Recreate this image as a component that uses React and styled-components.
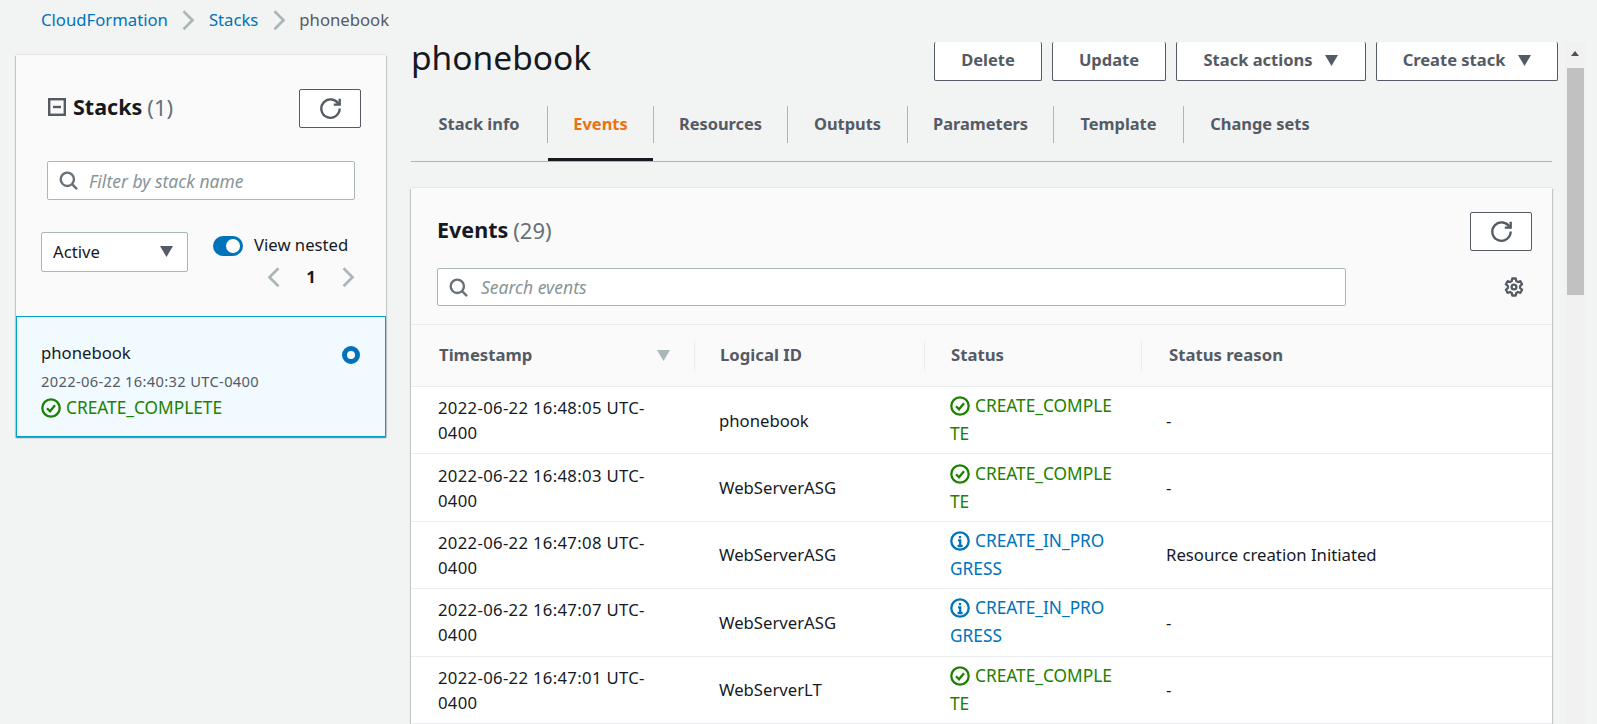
import React from 'react';
import styled, { createGlobalStyle } from 'styled-components';

const GlobalStyle = createGlobalStyle`
    html, body {
        margin: 0;
        padding: 0;
        background: #f2f3f3;
        overflow: hidden;
    }
    body {
        font-family: "Noto Sans", "Open Sans", sans-serif;
        font-size: 16.7px;
        color: #16191f;
    }
`;

const Page = styled.div`
    position: relative;
    width: 1597px;
    height: 724px;
    overflow: hidden;
`;

const Breadcrumbs = styled.nav`
    height: 42px;
    padding: 8px 0 0 41px;
    box-sizing: border-box;
    display: flex;
    align-items: flex-start;
    line-height: 24px;
    color: #545b64;
`;

const Crumb = styled.a`
    color: #0073bb;
`;

const CrumbSep = styled.span`
    display: flex;
    width: 41px;
    height: 24px;
    align-items: center;
    justify-content: center;
`;

const Columns = styled.div`
    display: flex;
    align-items: flex-start;
    padding-left: 16px;
`;

const StackPanel = styled.aside`
    width: 370px;
    margin-top: 13px;
    background: #fafafa;
    box-shadow: 0 1px 1px 0 rgba(0, 28, 36, .3), 1px 1px 1px 0 rgba(0, 28, 36, .15), -1px 1px 1px 0 rgba(0, 28, 36, .15), 0 -1px 1px 0 rgba(0, 28, 36, .05);
`;

const PanelTop = styled.div`
    height: 261px;
    box-sizing: border-box;
    padding: 34px 25px 0;
`;

const PanelTitleRow = styled.div`
    display: flex;
    justify-content: space-between;
    align-items: center;
    padding-left: 7px;
`;

const Heading = styled.h2`
    margin: 0 0 4px;
    display: flex;
    align-items: center;
    font-size: 21.5px;
    line-height: 30px;
    font-weight: 700;
    color: #16191f;
    span {
        font-weight: 400;
        font-size: 22px;
        color: #687078;
        margin-left: 5px;
    }
`;

const CollapseIcon = styled.svg`
    margin-right: 7px;
`;

const IconButton = styled.button`
    width: 62px;
    height: 39px;
    padding: 0;
    display: flex;
    align-items: center;
    justify-content: center;
    background: #fff;
    border: 1px solid #545b64;
    border-radius: 2px;
`;

const SearchBox = styled.div`
    display: flex;
    align-items: center;
    box-sizing: border-box;
    height: ${p => p.$h}px;
    width: ${p => p.$w}px;
    padding-left: 11px;
    background: #fff;
    border: 1px solid #aab7b8;
    border-radius: 2px;
    font-size: 17.5px;
    font-style: italic;
    color: #879596;
    svg {
        margin-right: ${p => p.$gap}px;
    }
`;

const FilterRow = styled.div`
    margin: 33px 0 0 6px;
`;

const ControlsRow = styled.div`
    display: flex;
    margin-top: 32px;
`;

const Select = styled.div`
    display: flex;
    align-items: center;
    justify-content: space-between;
    box-sizing: border-box;
    width: 147px;
    height: 40px;
    padding: 0 14px 2px 11px;
    background: #fff;
    border: 1px solid #aab7b8;
    border-radius: 2px;
    svg {
        margin-top: 2px;
    }
`;

const NestedBox = styled.div`
    margin-left: 25px;
`;

const NestedToggle = styled.div`
    display: flex;
    align-items: center;
    height: 26px;
    margin-top: 1px;
    gap: 11px;
`;

const NestedLabel = styled.span`
    margin-top: -3px;
`;

const Track = styled.span`
    display: flex;
    justify-content: flex-end;
    align-items: center;
    box-sizing: border-box;
    width: 30px;
    height: 20px;
    padding-right: 3px;
    border-radius: 10px;
    background: #0073bb;
    &::after {
        content: "";
        width: 14px;
        height: 14px;
        border-radius: 50%;
        background: #fff;
    }
`;

const Pager = styled.div`
    display: flex;
    align-items: center;
    justify-content: space-between;
    width: 92px;
    margin: 6px 0 0 52px;
    font-weight: 700;
    line-height: 24px;
`;

const StackCard = styled.div`
    display: flex;
    justify-content: space-between;
    box-sizing: border-box;
    height: 121px;
    padding: 23px 25px 0 24px;
    background: #f1faff;
    border: 1px solid #00a1c9;
`;

const StackName = styled.div`
    line-height: 25px;
`;

const StackDate = styled.div`
    margin: 6px 0 3px;
    font-size: 14.7px;
    letter-spacing: .33px;
    line-height: 20px;
    color: #545b64;
`;

const Radio = styled.span`
    display: block;
    box-sizing: border-box;
    width: 18px;
    height: 18px;
    margin-top: 6px;
    border-radius: 50%;
    border: 5px solid #0073bb;
    background: #fff;
`;

const Status = styled.div`
    color: ${p => (p.$kind === 'info' ? '#0073bb' : '#1d8102')};
    font-size: 17.3px;
    line-height: 28px;
    word-break: break-all;
    svg {
        vertical-align: -4px;
        margin-right: 5px;
    }
`;

const Main = styled.main`
    width: 1141px;
    margin-left: 25px;
`;

const TitleBar = styled.div`
    display: flex;
    justify-content: space-between;
    height: 39px;
`;

const Title = styled.h1`
    margin: 0;
    font-size: 33.5px;
    font-weight: 400;
    line-height: 30px;
    color: #16191f;
`;

const Actions = styled.div`
    display: flex;
    gap: 10px;
    margin-right: -6px;
`;

const ActionButton = styled.button`
    display: flex;
    align-items: center;
    justify-content: center;
    gap: 13px;
    box-sizing: border-box;
    width: ${p => p.$w}px;
    height: 39px;
    padding: 0 0 4px;
    background: #fff;
    border: 1px solid #545b64;
    border-top: none;
    border-radius: 2px;
    font: 700 16.5px "Noto Sans", sans-serif;
    color: #545b64;
    svg {
        margin-top: 4px;
    }
`;

const Tabs = styled.div`
    display: flex;
    height: 56px;
    margin-top: 25px;
    box-sizing: border-box;
    border-bottom: 1px solid #aab7b8;
`;

const Tab = styled.div`
    position: relative;
    box-sizing: border-box;
    width: ${p => p.$w}px;
    height: 37px;
    line-height: 35px;
    text-align: center;
    font-size: 16.4px;
    font-weight: 700;
    color: ${p => (p.$active ? '#ec7211' : '#545b64')};
    border-right: ${p => (p.$last ? 'none' : '1px solid #aab7b8')};
    &::after {
        content: "";
        display: ${p => (p.$active ? 'block' : 'none')};
        position: absolute;
        left: 0;
        right: 0;
        bottom: -18px;
        height: 3px;
        background: #16191f;
    }
`;

const EventsCard = styled.section`
    margin-top: 26px;
    background: #fff;
    box-shadow: 0 1px 1px 0 rgba(0, 28, 36, .3), 1px 1px 1px 0 rgba(0, 28, 36, .15), -1px 1px 1px 0 rgba(0, 28, 36, .15), 0 -1px 1px 0 rgba(0, 28, 36, .05);
`;

const CardHead = styled.div`
    height: 137px;
    box-sizing: border-box;
    padding: 24px 20px 0 26px;
    background: #fafafa;
    border-bottom: 1px solid #eaeded;
`;

const CardTitleRow = styled.div`
    display: flex;
    justify-content: space-between;
    height: 39px;
    align-items: center;
`;

const CardSearchRow = styled.div`
    display: flex;
    justify-content: space-between;
    align-items: center;
    margin-top: 17px;
    padding-right: 8px;
`;

const Table = styled.table`
    width: 100%;
    table-layout: fixed;
    border-collapse: collapse;
`;

const Th = styled.th`
    width: ${p => (p.$w ? `${p.$w}px` : 'auto')};
    height: 61px;
    padding: 0;
    background: #fafafa;
    border-bottom: 1px solid #eaeded;
    text-align: left;
`;

const ThInner = styled.div`
    display: flex;
    align-items: flex-start;
    justify-content: space-between;
    height: 30px;
    padding: 0 24px 0 ${p => p.$pad}px;
    border-right: ${p => (p.$last ? 'none' : '1px solid #eaeded')};
    font-weight: 700;
    color: #545b64;
    line-height: 27px;
    svg {
        align-self: center;
    }
`;

const Td = styled.td`
    height: 66.4px;
    padding: 0 25px 0 24px;
    border-bottom: 1px solid #eaeded;
    line-height: 25px;
    color: #16191f;
`;

const TimeCell = styled(Td)`
    padding-left: 27px;
    letter-spacing: .32px;
`;

const StatusCell = styled(Td)`
    padding: 0 29px 0 25px;
`;

const ScrollTrack = styled.div`
    position: absolute;
    top: 42px;
    bottom: 0;
    left: 1565px;
    width: 21px;
    background: #f1f1f1;
`;

const ScrollThumb = styled.div`
    position: absolute;
    top: 26px;
    left: 2px;
    width: 17px;
    height: 227px;
    background: #c1c1c1;
`;

const ScrollArrow = styled.div`
    position: absolute;
    top: 9px;
    left: 6px;
    border: 4.5px solid transparent;
    border-top: none;
    border-bottom: 5px solid #505050;
`;

const Chevron = ({ dir = 'right', color = '#aab7b8', size = 18 }) => (
    <svg width={size} height={size * 1.25} viewBox="0 0 16 20" fill="none" stroke={color} strokeWidth="2.4">
        <path d={dir === 'right' ? 'M4 2l8 8-8 8' : 'M12 2l-8 8 8 8'} />
    </svg>
);

const RefreshIcon = () => (
    <svg width="21" height="21" viewBox="0 0 16 16" fill="none" stroke="#545b64" strokeWidth="1.8">
        <path d="M10.5 5h4.5V.5" />
        <path d="M15 8a7 7 0 1 1-.7-3" />
    </svg>
);

const SearchIcon = () => (
    <svg width="19" height="19" viewBox="0 0 16 16" fill="none" stroke="#687078" strokeWidth="2">
        <circle cx="7" cy="7" r="5.6" />
        <path d="M11 11l4.2 4.2" />
    </svg>
);

const Caret = ({ color = '#545b64', w = 13 }) => (
    <svg width={w} height={w * 0.85} viewBox="0 0 13 11">
        <path d="M0 0h13L6.5 11z" fill={color} />
    </svg>
);

const GearIcon = () => (
    <svg width="20" height="20" viewBox="0 0 20 20" fill="none" stroke="#545b64" strokeWidth="2.3" strokeLinejoin="round">
        <path d="M8.3 1.5h3.4l.6 2.6 1.6.9 2.5-.8 1.7 3-2 1.8v2l2 1.8-1.7 3-2.5-.8-1.6.9-.6 2.6H8.3l-.6-2.6-1.6-.9-2.5.8-1.7-3 2-1.8V9L1.9 7.2l1.7-3 2.5.8 1.6-.9z" />
        <circle cx="10" cy="10" r="2.4" />
    </svg>
);

const StatusIcon = ({ kind }) => {
    const color = kind === 'info' ? '#0073bb' : '#1d8102';
    return (
        <svg width="20" height="20" viewBox="0 0 20 20" fill="none" stroke={color} strokeWidth="2.3">
            <circle cx="10" cy="10" r="8.7" />
            {kind === 'info'
                ? <path d="M8 9.3h2.2V15M7.6 15h5M10 5v2.3" />
                : <path d="M6 10.2l3 3 5-6" />}
        </svg>
    );
};

const StatusText = ({ kind, text }) => (
    <Status $kind={kind}>
        <StatusIcon kind={kind} />{text}
    </Status>
);

const tabs = [
    { label: 'Stack info', w: 137 },
    { label: 'Events', w: 106, active: true },
    { label: 'Resources', w: 134 },
    { label: 'Outputs', w: 120 },
    { label: 'Parameters', w: 146 },
    { label: 'Template', w: 130 },
    { label: 'Change sets', w: 152, last: true },
];

const events = [
    { time: '2022-06-22 16:48:05 UTC-0400', id: 'phonebook', status: 'CREATE_COMPLETE', reason: '-' },
    { time: '2022-06-22 16:48:03 UTC-0400', id: 'WebServerASG', status: 'CREATE_COMPLETE', reason: '-' },
    { time: '2022-06-22 16:47:08 UTC-0400', id: 'WebServerASG', status: 'CREATE_IN_PROGRESS', kind: 'info', reason: 'Resource creation Initiated' },
    { time: '2022-06-22 16:47:07 UTC-0400', id: 'WebServerASG', status: 'CREATE_IN_PROGRESS', kind: 'info', reason: '-' },
    { time: '2022-06-22 16:47:01 UTC-0400', id: 'WebServerLT', status: 'CREATE_COMPLETE', reason: '-' },
];

export default function App() {
    return (
        <Page>
            <GlobalStyle />
            <Breadcrumbs>
                <Crumb>CloudFormation</Crumb>
                <CrumbSep><Chevron /></CrumbSep>
                <Crumb>Stacks</Crumb>
                <CrumbSep><Chevron /></CrumbSep>
                <span>phonebook</span>
            </Breadcrumbs>
            <Columns>
                <StackPanel>
                    <PanelTop>
                        <PanelTitleRow>
                            <Heading>
                                <CollapseIcon width="18" height="18" viewBox="0 0 18 18" fill="none" stroke="#545b64" strokeWidth="2.4">
                                    <rect x="1.2" y="1.2" width="15.6" height="15.6" />
                                    <path d="M5 9h8" />
                                </CollapseIcon>
                                Stacks<span>(1)</span>
                            </Heading>
                            <IconButton><RefreshIcon /></IconButton>
                        </PanelTitleRow>
                        <FilterRow>
                            <SearchBox $w={308} $h={39} $gap={11}><SearchIcon />Filter by stack name</SearchBox>
                        </FilterRow>
                        <ControlsRow>
                            <Select>Active<Caret /></Select>
                            <NestedBox>
                                <NestedToggle><Track /><NestedLabel>View nested</NestedLabel></NestedToggle>
                                <Pager>
                                    <Chevron dir="left" />
                                    1
                                    <Chevron />
                                </Pager>
                            </NestedBox>
                        </ControlsRow>
                    </PanelTop>
                    <StackCard>
                        <div>
                            <StackName>phonebook</StackName>
                            <StackDate>2022-06-22 16:40:32 UTC-0400</StackDate>
                            <StatusText text="CREATE_COMPLETE" />
                        </div>
                        <Radio />
                    </StackCard>
                </StackPanel>
                <Main>
                    <TitleBar>
                        <Title>phonebook</Title>
                        <Actions>
                            <ActionButton $w={108}>Delete</ActionButton>
                            <ActionButton $w={114}>Update</ActionButton>
                            <ActionButton $w={190}>Stack actions<Caret /></ActionButton>
                            <ActionButton $w={182}>Create stack<Caret /></ActionButton>
                        </Actions>
                    </TitleBar>
                    <Tabs>
                        {tabs.map(t => (
                            <Tab key={t.label} $w={t.w} $active={t.active} $last={t.last}>{t.label}</Tab>
                        ))}
                    </Tabs>
                    <EventsCard>
                        <CardHead>
                            <CardTitleRow>
                                <Heading>Events<span>(29)</span></Heading>
                                <IconButton><RefreshIcon /></IconButton>
                            </CardTitleRow>
                            <CardSearchRow>
                                <SearchBox $w={909} $h={38} $gap={13}><SearchIcon />Search events</SearchBox>
                                <GearIcon />
                            </CardSearchRow>
                        </CardHead>
                        <Table>
                            <thead>
                                <tr>
                                    <Th $w={284}><ThInner $pad={28}>Timestamp<Caret color="#aab7b8" /></ThInner></Th>
                                    <Th $w={230}><ThInner $pad={25}>Logical ID</ThInner></Th>
                                    <Th $w={217}><ThInner $pad={26}>Status</ThInner></Th>
                                    <Th><ThInner $pad={27} $last>Status reason</ThInner></Th>
                                </tr>
                            </thead>
                            <tbody>
                                {events.map((e, i) => (
                                    <tr key={i}>
                                        <TimeCell>{e.time}</TimeCell>
                                        <Td>{e.id}</Td>
                                        <StatusCell><StatusText kind={e.kind} text={e.status} /></StatusCell>
                                        <Td>{e.reason}</Td>
                                    </tr>
                                ))}
                            </tbody>
                        </Table>
                    </EventsCard>
                </Main>
            </Columns>
            <ScrollTrack>
                <ScrollArrow />
                <ScrollThumb />
            </ScrollTrack>
        </Page>
    );
}
